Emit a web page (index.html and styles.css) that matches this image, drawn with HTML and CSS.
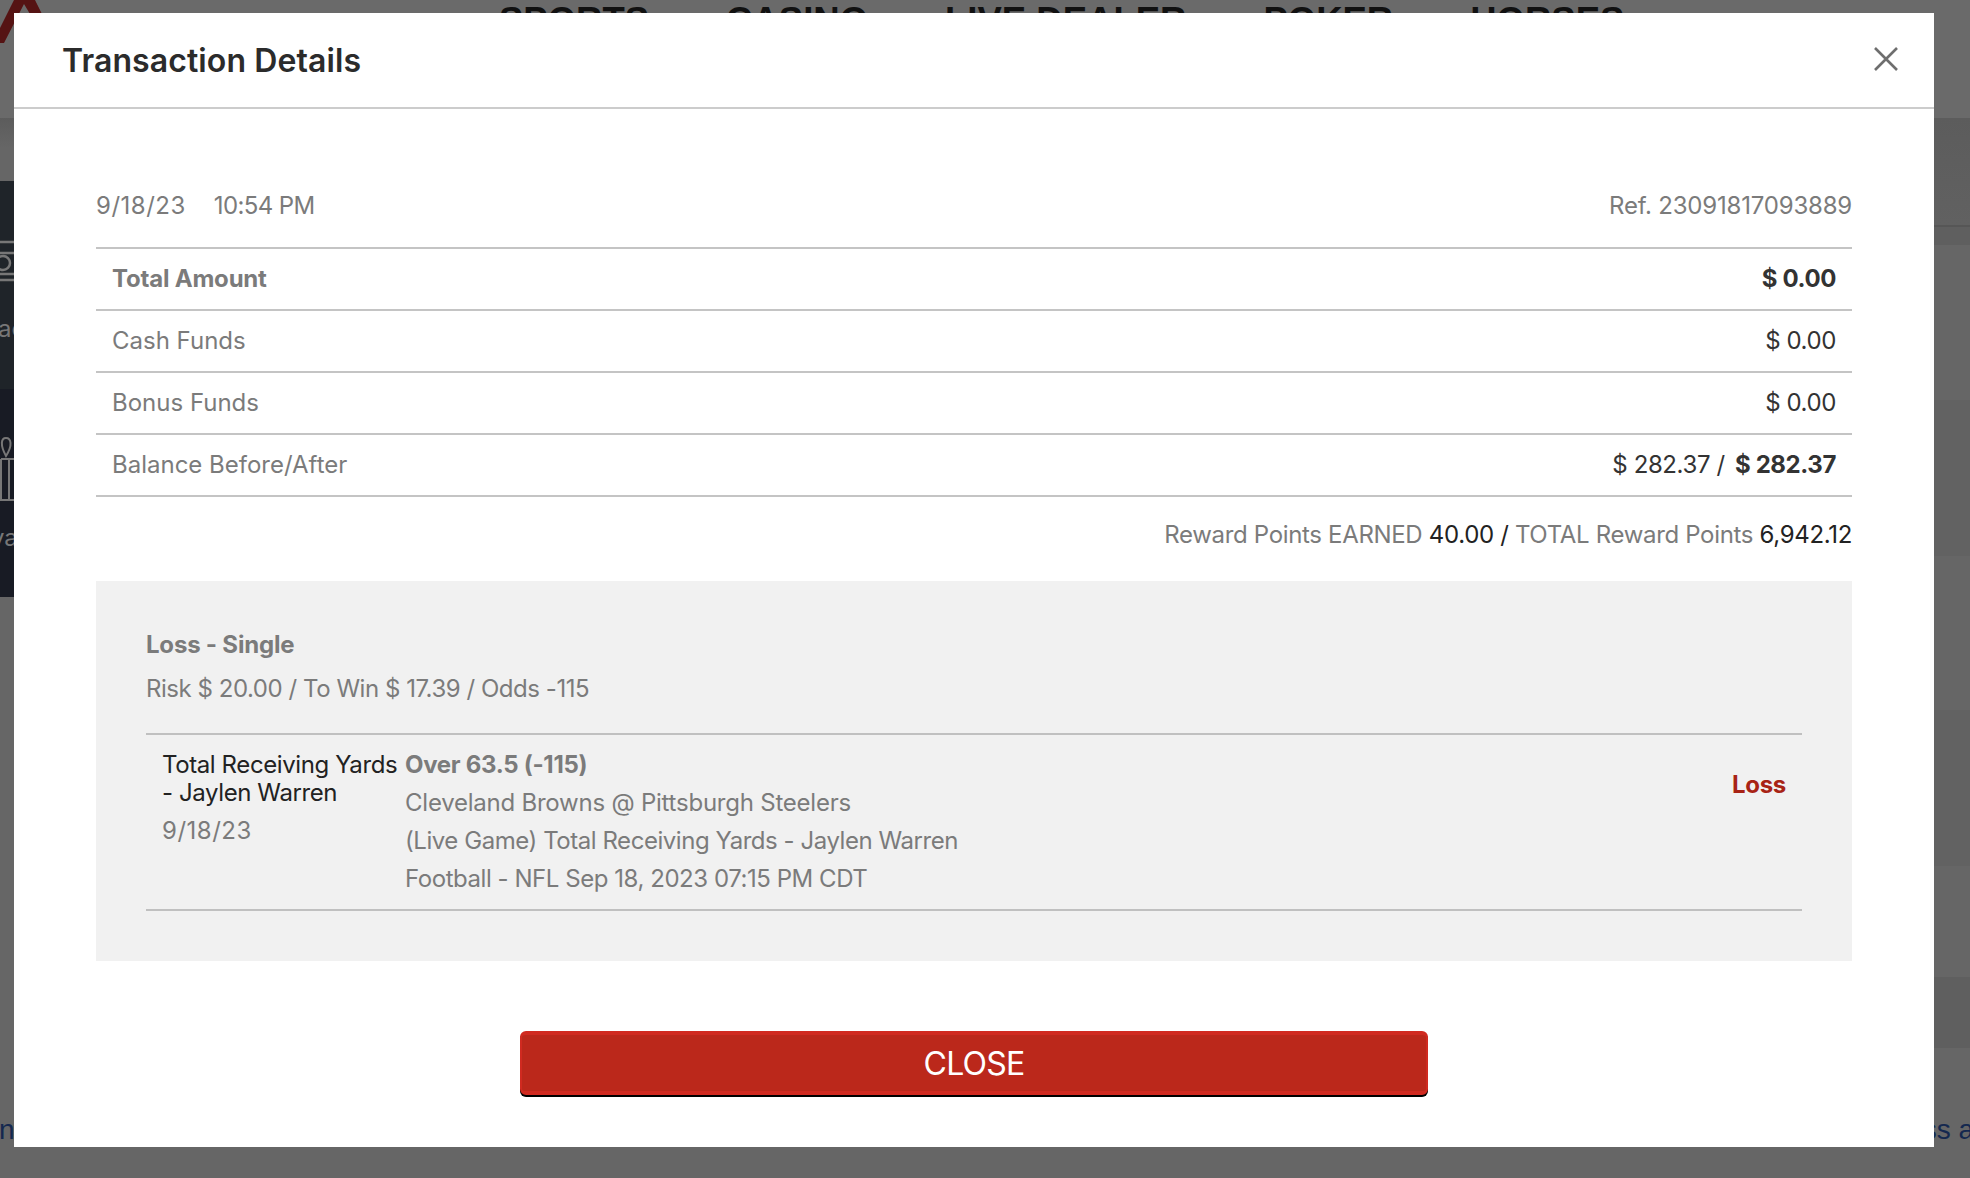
FILE: index.html
```html
<!DOCTYPE html>
<html lang="en">
<head>
  <meta charset="UTF-8">
  <meta name="viewport" content="width=device-width, initial-scale=1.0">
  <title>Transaction Details</title>
  <link rel="stylesheet" href="styles.css">
</head>
<body>

  <!-- dimmed page behind the dialog -->
  <div class="page">
    <header class="site-header">
      <svg class="logo" width="42" height="44" viewBox="0 0 42 44">
        <polygon points="0,28 14,0 35,0 42,14 30,14 24,4 4,43 0,43" fill="#551313"/>
      </svg>
      <nav class="site-nav">
        <span>SPORTS</span>
        <span>CASINO</span>
        <span>LIVE DEALER</span>
        <span>POKER</span>
        <span>HORSES</span>
      </nav>
    </header>

    <div class="page-main">
      <aside class="side">
        <div class="side-sub"></div>
        <div class="side-item side-cashier">
          <svg width="14" height="44" viewBox="0 0 14 44" fill="none" stroke="#777" stroke-width="2.5">
            <path d="M0 2H14M0 13H14M0 34H14M0 40H14"/>
            <circle cx="3" cy="23" r="7"/>
          </svg>
          <span class="side-label">ac</span>
        </div>
        <div class="side-item side-rewards">
          <svg width="14" height="64" viewBox="0 0 14 64" fill="none" stroke="#777" stroke-width="2">
            <path d="M6 19C0 8 1 1 6 1C11 1 13 8 6 19ZM1 22H14M1 22V63H14M9 22V63"/>
          </svg>
          <span class="side-label">va</span>
        </div>
      </aside>

      <div class="bands">
        <div class="band band-a"></div>
        <div class="band band-line"></div>
        <div class="band band-b"></div>
        <div class="band band-c"></div>
        <div class="band band-b2"></div>
        <div class="band band-c2"></div>
        <div class="band band-d"></div>
        <div class="band band-e"></div>
      </div>
    </div>

    <footer class="site-footer">
      <span>n</span>
      <span>ss a</span>
    </footer>
  </div>

  <div class="modal">
    <div class="modal-header">
      <h2>Transaction Details</h2>
      <svg class="modal-close" width="26" height="26" viewBox="0 0 26 26" fill="none" stroke="#6e6e6e" stroke-width="2.6">
        <path d="M2 2L24 24M24 2L2 24"/>
      </svg>
    </div>

    <div class="modal-body">
      <div class="meta">
        <div><span class="meta-date">9/18/23</span><span class="meta-time">10:54 PM</span></div>
        <div class="meta-ref">Ref. 23091817093889</div>
      </div>

      <div class="rows">
        <div class="row row-total">
          <span>Total Amount</span>
          <span class="amount">$ 0.00</span>
        </div>
        <div class="row">
          <span>Cash Funds</span>
          <span class="amount">$ 0.00</span>
        </div>
        <div class="row">
          <span>Bonus Funds</span>
          <span class="amount">$ 0.00</span>
        </div>
        <div class="row">
          <span>Balance Before/After</span>
          <span class="amount">$ 282.37 / <b class="after">$ 282.37</b></span>
        </div>
      </div>

      <div class="rewards">
        Reward Points EARNED <em>40.00 /</em> TOTAL Reward Points <em>6,942.12</em>
      </div>

      <div class="wager">
        <div class="wager-title">Loss - Single</div>
        <div class="wager-info">Risk $ 20.00 / To Win $ 17.39 / Odds -115</div>

        <div class="bet">
          <div class="bet-left">
            <div class="bet-market">Total Receiving Yards<br>- Jaylen Warren</div>
            <div class="bet-date">9/18/23</div>
          </div>
          <div class="bet-right">
            <div class="bet-pick">Over 63.5 (-115)</div>
            <div class="bet-teams">Cleveland Browns @ Pittsburgh Steelers</div>
            <div>(Live Game) Total Receiving Yards - Jaylen Warren</div>
            <div>Football - NFL Sep 18, 2023 07:15 PM CDT</div>
          </div>
          <div class="bet-result">Loss</div>
        </div>
      </div>

      <button type="button" class="close-btn">CLOSE</button>
    </div>
  </div>

</body>
</html>
```

FILE: styles.css
```css
* {
  box-sizing: border-box;
}

html, body {
  height: 100%;
}

body {
  margin: 0;
  overflow: hidden;
  background-color: #666;
  font-family: Inter, "Noto Sans", sans-serif;
}

/* page behind the dialog */
.page {
  height: 1178px;
  display: flex;
  flex-direction: column;
  overflow: hidden;
}

.site-header {
  height: 118px;
  flex-shrink: 0;
  background-color: #6a6a6a;
  padding-left: 499px;
  position: relative;
}

.logo {
  position: absolute;
  left: 0;
  top: 0;
}

.site-nav {
  display: flex;
  gap: 77px;
  padding-top: 3px;
  font-family: "Liberation Sans", sans-serif;
  font-size: 36.5px;
  font-weight: bold;
  line-height: 36px;
  color: #111;
}

.page-main {
  flex: 1;
  display: flex;
  justify-content: space-between;
}

.side {
  width: 14px;
}

.side-sub {
  height: 63px;
  background: linear-gradient(#5c5c5c, #666 30px);
}

.side-item {
  color: #777;
  white-space: nowrap;
}

.side-cashier {
  height: 208px;
  padding-top: 59px;
  background-color: #1f2429;
}

.side-rewards {
  height: 208px;
  padding-top: 48px;
  background-color: #181b24;
}

.side-item svg {
  display: block;
}

.side-label {
  display: block;
  margin-left: -2px;
  font-size: 24px;
  line-height: 28px;
}

.side-cashier .side-label {
  margin-top: 31px;
}

.side-rewards .side-label {
  margin-top: 23px;
  margin-left: -9px;
}

.bands {
  width: 36px;
}

.band-a {
  height: 107px;
  background: linear-gradient(#5c5c5c, #616161);
}

.band-line {
  height: 20px;
  border-top: 2px solid #565656;
  background-color: #5f5f5f;
}

.band-b {
  height: 155px;
  background-color: #666;
}

.band-c {
  height: 156px;
  background-color: #626262;
}

.band-b2 {
  height: 154px;
  background-color: #666;
}

.band-c2 {
  height: 156px;
  background-color: #626262;
}

.band-d {
  height: 111px;
  background-color: #666;
}

.band-e {
  height: 71px;
  background-color: #5f5f5f;
}

.site-footer {
  height: 72px;
  flex-shrink: 0;
  display: flex;
  justify-content: space-between;
  margin-top: -58px;
  padding-top: 6px;
  font-family: "Liberation Sans", sans-serif;
  font-size: 28px;
  line-height: 36px;
  color: #14284f;
  white-space: nowrap;
  position: relative;
}

.site-footer span:first-child {
  margin-left: -1px;
}

.site-footer span:last-child {
  margin-right: -4px;
}

/* dialog */
.modal {
  position: absolute;
  left: 14px;
  top: 13px;
  width: 1920px;
  height: 1134px;
  background-color: #fff;
  display: flex;
  flex-direction: column;
}

.modal-header {
  height: 96px;
  flex-shrink: 0;
  border-bottom: 2px solid #ccc;
  padding: 0 35px 0 48px;
  display: flex;
  justify-content: space-between;
  align-items: center;
}

.modal-header h2 {
  margin: 0;
  font-size: 32px;
  font-weight: 600;
  letter-spacing: 0.1px;
  color: #2b2b2b;
}

.modal-close {
  margin-top: -2px;
}

.modal-body {
  padding: 76px 82px 0;
  font-size: 24px;
  color: #7b7b7b;
}

.meta {
  display: flex;
  justify-content: space-between;
  line-height: 42px;
  padding-bottom: 20px;
}

.meta-date {
  margin-right: 28px;
  letter-spacing: 0.5px;
}

.meta-time {
  letter-spacing: -0.6px;
}

.meta-ref {
  letter-spacing: -0.2px;
}

.rows {
  border-top: 2px solid #c4c4c4;
}

.row {
  height: 62px;
  padding: 0 16px 1px;
  border-bottom: 2px solid #c4c4c4;
  display: flex;
  justify-content: space-between;
  align-items: center;
}

.row-total {
  font-weight: 700;
  letter-spacing: -0.2px;
}

.amount {
  color: #333;
  letter-spacing: -0.4px;
}

.after {
  margin-left: 4px;
}

.rewards {
  margin-top: 20px;
  line-height: 36px;
  text-align: right;
  letter-spacing: -0.33px;
}

.rewards em {
  font-style: normal;
  color: #222;
}

.wager {
  margin-top: 28px;
  height: 380px;
  padding: 46px 50px 0;
  background-color: #f1f1f1;
}

.wager-title {
  line-height: 36px;
  font-weight: 700;
  letter-spacing: -0.2px;
}

.wager-info {
  margin-top: 8px;
  line-height: 36px;
  letter-spacing: -0.46px;
}

.bet {
  margin-top: 26px;
  padding: 11px 16px;
  border-top: 2px solid #c0c0c0;
  border-bottom: 2px solid #c0c0c0;
  display: flex;
}

.bet-left {
  width: 243px;
  flex-shrink: 0;
  padding-top: 5px;
  line-height: 28px;
}

.bet-market {
  color: #222;
  white-space: nowrap;
  letter-spacing: -0.4px;
}

.bet-date {
  margin-top: 10px;
  letter-spacing: 0.5px;
}

.bet-right {
  flex: 1;
  line-height: 38px;
  letter-spacing: -0.45px;
}

.bet-pick {
  font-weight: 700;
  letter-spacing: -0.3px;
}

.bet-teams {
  letter-spacing: -0.23px;
}

.bet-result {
  margin-top: 20px;
  line-height: 38px;
  font-weight: 700;
  letter-spacing: -0.3px;
  color: #a82315;
}

.close-btn {
  display: block;
  width: 908px;
  height: 64px;
  margin: 70px 0 0 424px;
  padding: 0;
  background-color: #bb281b;
  border: 2px solid #d02a20;
  border-width: 4px 2px;
  border-radius: 6px;
  box-shadow: 0 2px 0 #000;
  font-family: Inter, sans-serif;
  font-size: 32px;
  letter-spacing: -0.8px;
  color: #fff;
  cursor: pointer;
}
```
